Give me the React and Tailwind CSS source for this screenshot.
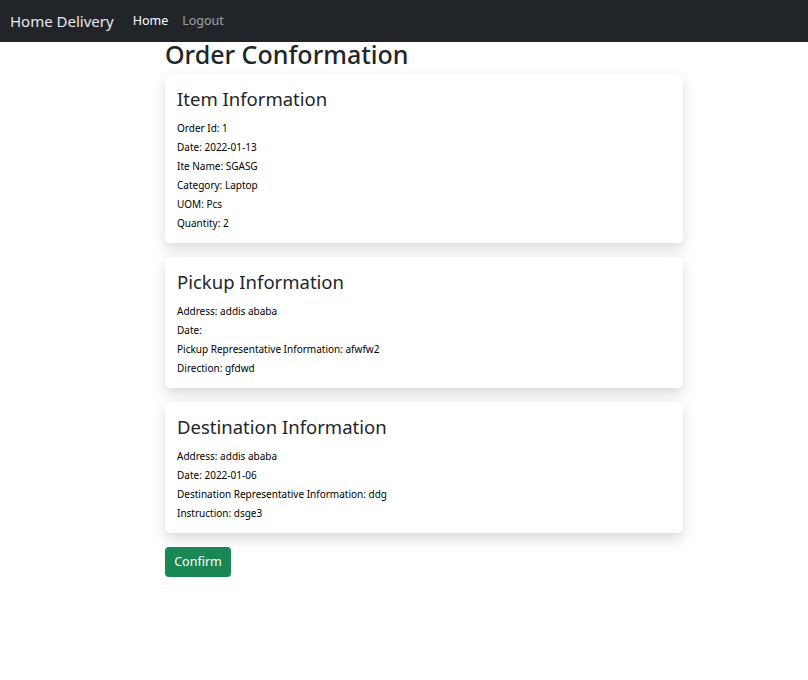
import React from 'react';

const sections = [
  {
    title: 'Item Information',
    rows: ['Order Id: 1', 'Date: 2022-01-13', 'Ite Name: SGASG', 'Category: Laptop', 'UOM: Pcs', 'Quantity: 2'],
  },
  {
    title: 'Pickup Information',
    rows: ['Address: addis ababa', 'Date:', 'Pickup Representative Information: afwfw2', 'Direction: gfdwd'],
  },
  {
    title: 'Destination Information',
    rows: ['Address: addis ababa', 'Date: 2022-01-06', 'Destination Representative Information: ddg', 'Instruction: dsge3'],
  },
];

function InfoCard({ title, rows }) {
  return (
    <div className="bg-white rounded-[5px] px-3 pt-[13px] pb-[10px] shadow-[0_6px_14px_rgba(0,0,0,0.15)]">
      <h2 className="text-[18.5px] leading-[24px] text-[#212529] mb-2">{title}</h2>
      {rows.map((r, i) => (
        <div key={i} className="text-[10px] leading-[19px] text-black">{r}</div>
      ))}
    </div>
  );
}

export default function App() {
  return (
    <div className="min-h-[680px] bg-white font-['Noto_Sans',sans-serif]">
      <nav className="h-[42px] bg-[#212529] flex items-center px-[10px]">
        <span className="text-[15px] text-white/90 mr-[19px]">Home Delivery</span>
        <a className="text-[12.5px] text-white mr-[14px]">Home</a>
        <a className="text-[12.5px] text-white/55">Logout</a>
      </nav>
      <div className="w-[518px] ml-[165px]">
        <h1 className="text-[25px] leading-[26px] font-medium text-[#212529] -mt-[1px] mb-[7px]">Order Conformation</h1>
        <div className="flex flex-col gap-[14px]">
          {sections.map((s) => (
            <InfoCard key={s.title} title={s.title} rows={s.rows} />
          ))}
        </div>
        <button className="mt-[14px] h-[30px] w-[66px] rounded-[4px] bg-[#198754] text-white text-[12.5px]">Confirm</button>
      </div>
    </div>
  );
}
